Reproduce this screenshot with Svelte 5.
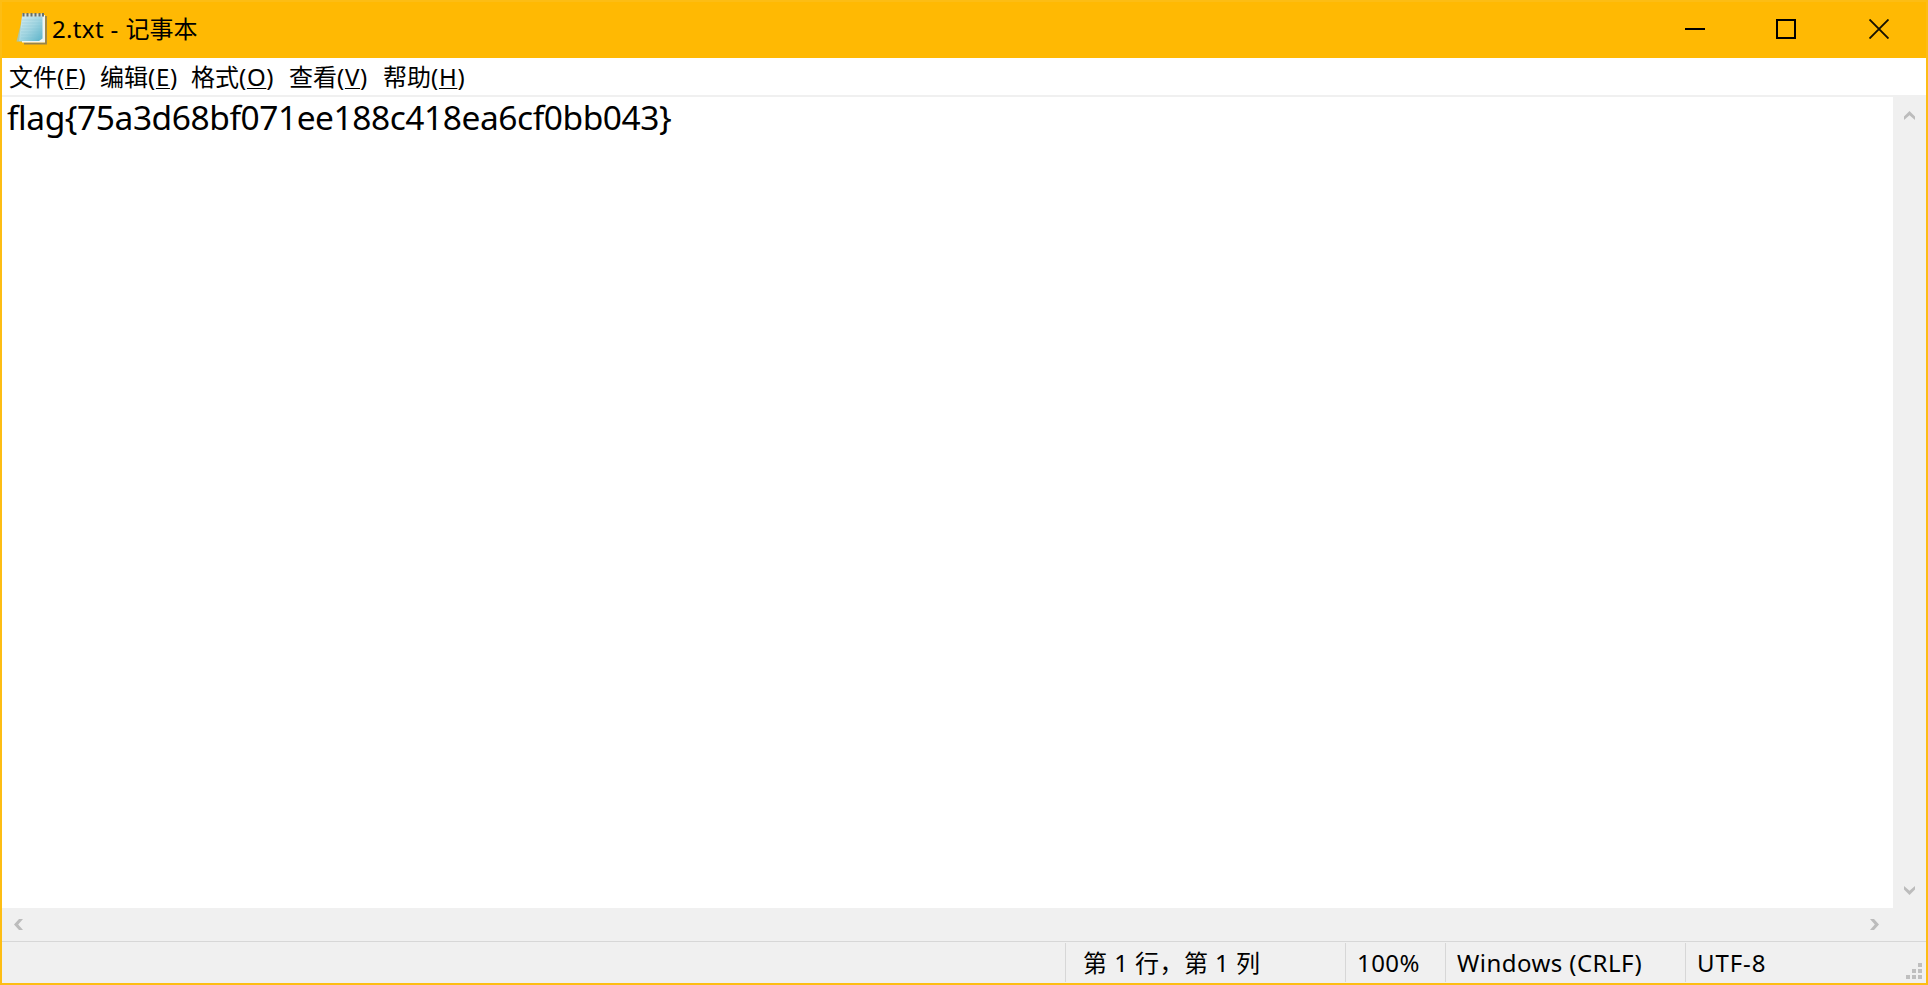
<script>
  const menus = [
    { label: '文件', key: 'F', width: 91 },
    { label: '编辑', key: 'E', width: 91 },
    { label: '格式', key: 'O', width: 98 },
    { label: '查看', key: 'V', width: 94 },
    { label: '帮助', key: 'H', width: 98 }
  ];
</script>

<div class="window">
  <header class="titlebar">
    <svg class="app-icon" width="32" height="34" viewBox="0 0 32 34">
      <defs>
        <linearGradient id="paper" x1="0" y1="0" x2="1" y2="1">
          <stop offset="0" stop-color="#d8edf0" />
          <stop offset="0.5" stop-color="#a3d6e2" />
          <stop offset="1" stop-color="#57b2c9" />
        </linearGradient>
      </defs>
      <path d="M6 7 .5 29.500 10 30z" fill="#aec7a0" />
      <path d="M8 31.500h22V4" fill="none" stroke="#96844f" stroke-width="1.800" />
      <path d="M6 3h23v27.500H6z" fill="#f1f5f2" />
      <path d="M6 4h20.500v22.500L23 29H3z" fill="url(#paper)" />
      <path d="M6 8h20M6 11h20M6 14h20M5 17h21M5 20h21M5 23h21M5 26h21" stroke="#82bfcd" stroke-opacity=".35" />
      <path d="M6 3h22" stroke="#d9dfd8" stroke-width="3" />
      <path d="M7.500 1v3.500M11.500 1v3.500M15.500 1v3.500M19.500 1v3.500M23.500 1v3.500M27 1v3.500" stroke="#65706c" stroke-width="2" />
    </svg>
    <span class="title"><span class="file">2.txt -</span>记事本</span>
    <div class="controls">
      <svg width="20" height="20" viewBox="0 0 20 20"><path d="M0 10h20" stroke="#000" stroke-width="2" /></svg>
      <svg width="20" height="20" viewBox="0 0 20 20"><path d="M1 1h18v18H1z" fill="none" stroke="#000" stroke-width="2" /></svg>
      <svg width="20" height="20" viewBox="0 0 20 20"><path d="M.5.5l19 19M19.500.5l-19 19" stroke="#151000" stroke-width="1.900" /></svg>
    </div>
  </header>

  <nav class="menu">
    {#each menus as m}
      <span class="item" style:width="{m.width}px">{m.label}<span class="key">(<span class="u">{m.key}</span>)</span></span>
    {/each}
  </nav>

  <main class="work">
    <div class="editor">{'flag{75a3d68bf071ee188c418ea6cf0bb043}'}</div>
    <div class="vscroll">
      <svg width="11" height="9" viewBox="0 0 11 9"><path d="M0 5.500 5.500 0 11 5.500V9L5.500 4.200 0 9z" fill="#bcbcbc" /></svg>
      <svg width="11" height="9" viewBox="0 0 11 9"><path d="M0 3.500 5.500 9 11 3.500V0L5.500 4.800 0 0z" fill="#bcbcbc" /></svg>
    </div>
  </main>
  <div class="hscroll">
    <svg width="9" height="11" viewBox="0 0 9 11"><path d="M5 0 0 5.500 5 11H9L4.200 5.500 9 0z" fill="#bcbcbc" /></svg>
    <svg width="9" height="11" viewBox="0 0 9 11"><path d="M4 0 9 5.500 4 11H0L4.800 5.500 0 0z" fill="#bcbcbc" /></svg>
  </div>

  <footer class="status">
    <div class="cell pos">第 1 行，第 1 列</div>
    <div class="cell zoom">100%</div>
    <div class="cell eol">Windows (CRLF)</div>
    <div class="cell enc">UTF-8</div>
    <svg class="grip" width="16" height="16" viewBox="0 0 16 16"><path d="M12 0h4v4h-4zM6 6h4v4H6zM12 6h4v4h-4zM0 12h4v4H0zM6 12h4v4H6zM12 12h4v4h-4z" fill="#bfbfbf" /></svg>
  </footer>
</div>

<style>
  :global(body) { margin: 0; overflow: hidden; }
  .window {
    box-sizing: border-box;
    width: 1928px;
    height: 985px;
    display: flex;
    flex-direction: column;
    border: 2px solid #fdbd14;
    background: #fff;
    color: #000;
    font: 24px/32px "Noto Sans", "Noto Sans CJK SC", sans-serif;
    white-space: pre;
  }
  svg { display: block; flex: none; }
  .titlebar {
    flex: none;
    box-sizing: border-box;
    height: 56px;
    display: flex;
    align-items: center;
    background: #ffb903;
    padding: 0 0 2px 14px;
  }
  .title { display: flex; gap: 7px; margin-left: 4px; }
  .file { letter-spacing: 0.35px; }
  .controls { display: flex; gap: 71px; margin-left: auto; padding-right: 37px; }
  .controls svg:last-child { margin-left: 2px; }
  .menu {
    flex: none;
    height: 37px;
    display: flex;
    align-items: center;
    padding-left: 7px;
    border-bottom: 2px solid #f0f0f0;
  }
  .item { flex: none; display: flex; }
  .key { letter-spacing: 0.7px; }
  .u { text-decoration: underline; text-decoration-thickness: 1px; text-underline-offset: 2px; }
  .work { flex: 1; min-height: 0; display: flex; }
  .editor { flex: 1; padding: 0 5px; font-size: 33.5px; line-height: 40px; letter-spacing: -0.44px; }
  .vscroll {
    width: 33px;
    box-sizing: border-box;
    display: flex;
    flex-direction: column;
    justify-content: space-between;
    align-items: center;
    padding: 14px 0 13px;
    background: #f0f0f0;
  }
  .hscroll {
    flex: none;
    height: 33px;
    box-sizing: border-box;
    display: flex;
    align-items: center;
    justify-content: space-between;
    padding: 0 47px 0 12px;
    background: #f0f0f0;
  }
  .status {
    flex: none;
    height: 42px;
    box-sizing: border-box;
    display: flex;
    border-top: 1px solid #d7d7d7;
    background: #f0f0f0;
    padding-left: 1063px;
  }
  .cell {
    box-sizing: border-box;
    height: 39px;
    margin-top: 1px;
    border-left: 1px solid #d7d7d7;
    padding-left: 11px;
    line-height: 39px;
    letter-spacing: 0.45px;
    flex: none;
  }
  .pos { width: 280px; padding-left: 17px; }
  .zoom { width: 100px; }
  .eol { width: 240px; }
  .enc { width: 200px; letter-spacing: 0.9px; }
  .grip { margin: auto 4px 4px auto; }
</style>
